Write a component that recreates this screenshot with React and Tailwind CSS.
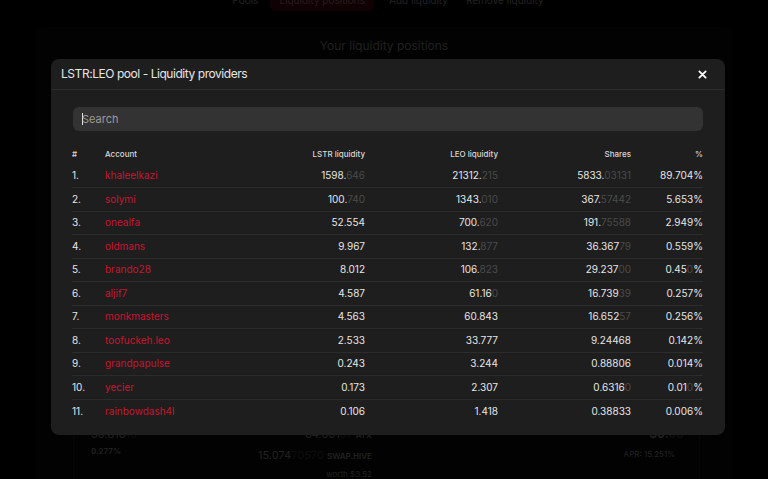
import React from "react";

const rows = [
  ["khaleelkazi", ["1598.", "646"], ["21312.", "215"], ["5833.", "03131"], ["89.704", "", "%"]],
  ["solymi", ["100.", "740"], ["1343.", "010"], ["367.", "57442"], ["5.653", "", "%"]],
  ["onealfa", ["52.554", ""], ["700.", "620"], ["191.", "75588"], ["2.949", "", "%"]],
  ["oldmans", ["9.967", ""], ["132.", "877"], ["36.367", "79"], ["0.559", "", "%"]],
  ["brando28", ["8.012", ""], ["106.", "823"], ["29.237", "00"], ["0.45", "0", "%"]],
  ["aljif7", ["4.587", ""], ["61.16", "0"], ["16.739", "39"], ["0.257", "", "%"]],
  ["monkmasters", ["4.563", ""], ["60.843", ""], ["16.652", "57"], ["0.256", "", "%"]],
  ["toofuckeh.leo", ["2.533", ""], ["33.777", ""], ["9.24468", ""], ["0.142", "", "%"]],
  ["grandpapulse", ["0.243", ""], ["3.244", ""], ["0.88806", ""], ["0.014", "", "%"]],
  ["yecier", ["0.173", ""], ["2.307", ""], ["0.6316", "0"], ["0.01", "0", "%"]],
  ["rainbowdash4l", ["0.106", ""], ["1.418", ""], ["0.38833", ""], ["0.006", "", "%"]],
];

const Num = ({ v }) => (
  <span>
    {v[0]}
    <span className="text-[#4a4a4a]">{v[1]}</span>
    {v[2]}
  </span>
);

const BackgroundPage = () => (
  <div className="min-h-[479px] bg-black text-[#d4d4d4]">
    {/* Tabs */}
    <div className="flex justify-center items-center -mt-[11px] h-[22px] text-[10px] pl-[8px]">
      <span className="mr-[12px]">Pools</span>
      <span className="px-[9px] h-[22px] flex items-center rounded-md bg-[#6b0a17] text-[#f2b4bd]">Liquidity positions</span>
      <span className="ml-[15px]">Add liquidity</span>
      <span className="ml-[18px]">Remove liquidity</span>
    </div>

    {/* Card */}
    <div className="mx-[35px] mt-[16px] bg-[#0e0e0e] rounded-t-lg pt-[10px] h-[452px]">
      <div className="text-center text-[12px] text-[#c9c9c9]">Your liquidity positions</div>
      <div className="h-[371px]" />
      <div className="ml-[38px] mr-[33px] border-x border-[#2a2a2a] h-[60px] pl-[17px] flex">
        <div className="w-[167px]">
          <div className="text-[11px] leading-[16px]">
            30.816<span className="text-[#555]">16</span>
          </div>
          <div className="text-[8px] font-semibold mt-[3px]">0.277%</div>
        </div>
        <div className="text-right text-[11px] leading-[16px]">
          <div>
            64.601<span className="text-[#555]">57</span> <span className="text-[8px] font-semibold">ATX</span>
          </div>
          <div className="mt-[4px]">
            15.074<span className="text-[#555]">70570</span> <span className="text-[8px] font-semibold">SWAP.HIVE</span>
          </div>
          <div className="text-[8px] mt-[2px]">worth $3.52</div>
        </div>
        <div className="flex-1 text-right pr-[15px]">
          <div className="text-[12px] font-semibold leading-[16px]">
            $0.<span className="text-[#555]">00</span>
          </div>
          <div className="text-[8px] mt-[6px] pr-[9px]">APR: 15.251%</div>
        </div>
      </div>
    </div>
  </div>
);

export default function App() {
  return (
    <div
      className="relative w-[768px] h-[479px] overflow-hidden bg-black"
      style={{ fontFamily: "Inter, 'Noto Sans', sans-serif" }}
    >
      <BackgroundPage />

      {/* Overlay */}
      <div className="absolute inset-0 bg-black/85" />

      {/* Modal */}
      <div className="absolute left-[51px] top-[59px] w-[674px] bg-[#1e1e1e] rounded-lg text-[#e6e6e6]">
        <div className="h-[31px] px-[10px] flex items-center justify-between border-b border-[#2c2c2c]">
          <span className="text-[12px] tracking-[-0.45px]">LSTR:LEO pool - Liquidity providers</span>
          <button className="text-white mr-[8px]">
            <svg width="9" height="9" viewBox="0 0 10 10">
              <path d="M1.5 1.5 L8.5 8.5 M8.5 1.5 L1.5 8.5" stroke="currentColor" strokeWidth="2" strokeLinecap="round" />
            </svg>
          </button>
        </div>

        <div className="px-[21px] pt-[17px] pb-[12px]">
          <div className="h-[24px] mx-[1px] rounded-md bg-[#333333] flex items-center px-[9px] text-[11px] text-[#9a9a9a]">
            <span className="w-px h-[12px] bg-[#e6e6e6] -mr-px" />
            Search
          </div>

          <table className="w-[631px] mt-[12px] border-collapse text-[10px]">
            <colgroup>
              <col className="w-[33px]" />
              <col className="w-[140px]" />
              <col className="w-[120px]" />
              <col className="w-[133px]" />
              <col className="w-[133px]" />
              <col className="w-[72px]" />
            </colgroup>
            <thead>
              <tr className="h-[21px] text-[8px] font-medium text-[#d8d8d8]">
                <th className="text-left font-medium">#</th>
                <th className="text-left font-medium">Account</th>
                <th className="text-right font-medium">LSTR liquidity</th>
                <th className="text-right font-medium">LEO liquidity</th>
                <th className="text-right font-medium">Shares</th>
                <th className="text-right font-medium">%</th>
              </tr>
            </thead>
            <tbody>
              {rows.map((r, i) => (
                <tr
                  key={r[0]}
                  className={`h-[23.5px] ${i < rows.length - 1 ? "border-b border-[#2c2c2c]" : ""}`}
                >
                  <td className="text-left">{i + 1}.</td>
                  <td className="text-left text-[#c8152f]">{r[0]}</td>
                  <td className="text-right"><Num v={r[1]} /></td>
                  <td className="text-right"><Num v={r[2]} /></td>
                  <td className="text-right"><Num v={r[3]} /></td>
                  <td className="text-right"><Num v={r[4]} /></td>
                </tr>
              ))}
            </tbody>
          </table>
        </div>
      </div>
    </div>
  );
}
